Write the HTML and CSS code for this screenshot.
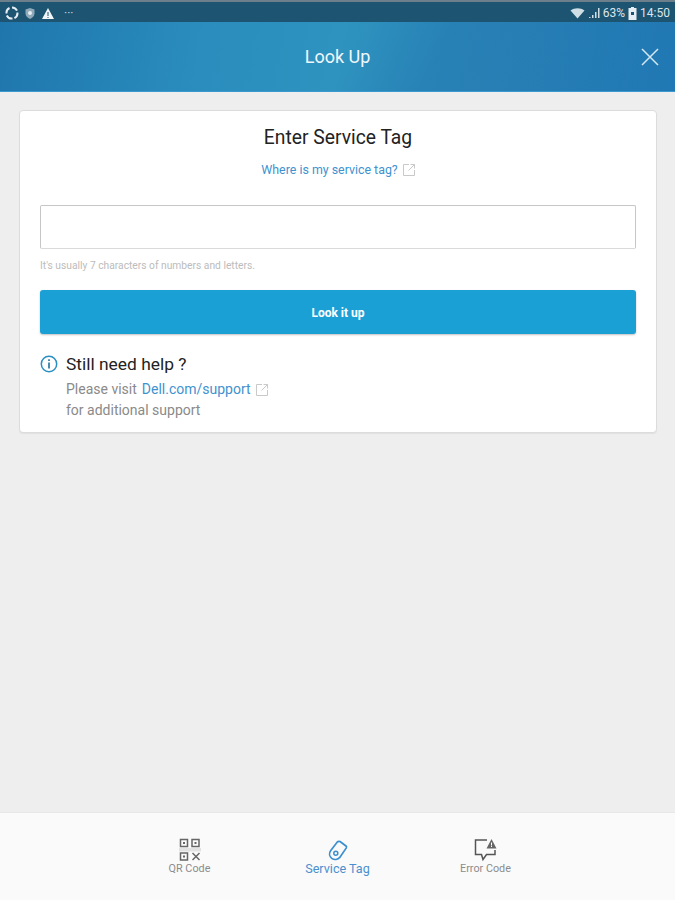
FILE: index.html
```html
<!DOCTYPE html>
<html lang="en">
<head>
    <meta charset="UTF-8">
    <meta name="viewport" content="width=device-width, initial-scale=1.0">
    <title>Look Up</title>
    <link rel="stylesheet" href="styles.css">
</head>
<body>
    <div class="page">
        <div class="status-bar">
            <div class="status-left">
                <svg width="14" height="14" viewBox="0 0 14 14"><path d="M7 1.500a5.500 5.500 0 0 1 5 3.200M12.400 6.500a5.500 5.500 0 0 1-3 5.600M7.500 12.500a5.500 5.500 0 0 1-5.700-3M1.500 7.500a5.500 5.500 0 0 1 3-5.500" fill="none" stroke="#e6eef3" stroke-width="2"/></svg>
                <svg width="12" height="13" viewBox="0 0 12 13"><path d="M6 1l4.500 1.500v4c0 2.500-2 4.500-4.500 5.500-2.500-1-4.500-3-4.500-5.500v-4z" fill="#8fa9b8"/><circle cx="6" cy="6" r="2" fill="#e6eef3"/></svg>
                <svg width="14" height="13" viewBox="0 0 14 13"><path d="M7 1l6 11H1z" fill="#f2f5f7"/><path d="M6.500 5h1v4h-1zM6.500 10h1v1h-1z" fill="#1c5472"/></svg>
                <span class="status-dots">···</span>
            </div>
            <div class="status-right">
                <svg width="15" height="11" viewBox="0 0 15 11"><path d="M0.500 2.500C4.500-0.500 10.500-0.500 14.500 2.500L7.500 10.500z" fill="#cfdde5"/></svg>
                <svg width="12" height="12" viewBox="0 0 12 12"><path d="M1 10h1.500v1H1zM4 8h1.500v3H4zM7 5h1.500v6H7zM10 1h1.500v10H10z" fill="#cfdde5"/></svg>
                <span>63%</span>
                <svg width="9" height="13" viewBox="0 0 9 13"><path d="M3 0h3v1h2.500v12H.5V1H3z" fill="#e6eef3"/><path d="M3 5h3v3H3z" fill="#1c5472"/></svg>
                <span>14:50</span>
            </div>
        </div>

        <header class="app-header">
            <h1>Look Up</h1>
            <svg class="close-icon" width="18" height="18" viewBox="0 0 18 18"><path d="M1 1l16 16M17 1L1 17" stroke="#d4e8f3" stroke-width="1.500" fill="none"/></svg>
        </header>

        <main class="content">
            <div class="card">
                <h2 class="card-title">Enter Service Tag</h2>
                <div class="where-link">
                    <a>Where is my service tag?</a>
                    <svg class="ext-icon" width="12" height="12" viewBox="0 0 12 12"><path d="M6 .5H.5v11h11V6M7.500.5h4v4M11.500.5L5.500 6.500" fill="none" stroke="#c9c9c9"/></svg>
                </div>
                <input class="tag-input" type="text">
                <p class="hint">It's usually 7 characters of numbers and letters.</p>
                <button class="lookup-btn" type="button">Look it up</button>
                <div class="help">
                    <div class="help-title">
                        <svg width="18" height="18" viewBox="0 0 18 18"><circle cx="9" cy="9" r="7.700" fill="none" stroke="#2b8fc4" stroke-width="1.500"/><path d="M8.200 4.200h1.600v1.700H8.200zM8.200 7.500h1.600v6H8.200z" fill="#1f6f9e"/></svg>
                        <span>Still need help ?</span>
                    </div>
                    <div class="help-text">
                        <div class="help-line">Please visit <a>Dell.com/support</a>
                            <svg class="ext-icon" width="12" height="12" viewBox="0 0 12 12"><path d="M6 .5H.5v11h11V6M7.500.5h4v4M11.500.5L5.500 6.500" fill="none" stroke="#c9c9c9"/></svg>
                        </div>
                        <div>for additional support</div>
                    </div>
                </div>
            </div>
        </main>

        <nav class="bottom-nav">
            <div class="nav-item">
                <svg width="22" height="24" viewBox="0 0 22 24">
                    <path d="M0 10h22v3.500H0z" fill="#e2e2e2"/>
                    <g fill="none" stroke="#666" stroke-width="1.500"><path d="M1.500 1.500h7v7h-7zM13 1.500h7v7h-7zM1.500 15h7v7h-7z"/></g>
                    <path d="M4 4h2v2H4zM15.500 4h2v2h-2zM4 17.500h2v2H4z" fill="#666"/>
                    <path d="M13.500 15l7 7M20.500 15l-7 7" stroke="#666" stroke-width="1.500"/>
                </svg>
                <span>QR Code</span>
            </div>
            <div class="nav-item active">
                <svg width="22" height="24" viewBox="0 0 22 24">
                    <path d="M13 3.500l6 4.500c.7.600.7 1.200.3 1.900l-6.500 9.500c-2 2.400-5.500 2.800-8 1-2.500-2-3-5.200-1.200-7.700l6.500-8.500c.8-.8 2-1 2.900-.700z" fill="none" stroke="#3b8fcf" stroke-width="1.700"/>
                    <circle cx="8.800" cy="15.300" r="2" fill="none" stroke="#3b8fcf" stroke-width="1.500"/>
                </svg>
                <span>Service Tag</span>
            </div>
            <div class="nav-item">
                <svg width="24" height="24" viewBox="0 0 24 24">
                    <path d="M13 2H1.500v14.500h6l1.500 5 3.500-5H21V12" fill="none" stroke="#555" stroke-width="1.500"/>
                    <path d="M17.500 1l5 9.500h-10z" fill="#666"/>
                    <path d="M17 4.500h1v3h-1zM17 8h1v1h-1z" fill="#fff"/>
                </svg>
                <span>Error Code</span>
            </div>
        </nav>
    </div>
</body>
</html>
```

FILE: styles.css
```css
* { margin: 0; padding: 0; box-sizing: border-box; }
body { font-family: Roboto, "Liberation Sans", sans-serif; background: #eeeeee; }

.page { width: 675px; height: 900px; display: flex; flex-direction: column; overflow: hidden; }

.status-bar { height: 22px; flex: none; display: flex; justify-content: space-between; align-items: center; padding: 2px 5px 0 5px; background: #1c5472; border-top: 2px solid #6d7f8a; color: #dbe6ec; font-size: 11px; }
.status-left { display: flex; align-items: center; gap: 5px; }
.status-dots { margin-left: 4px; font-size: 12px; line-height: 12px; color: #c4d4dd; }
.status-right { display: flex; align-items: center; gap: 3px; font-size: 12px; }

.app-header { height: 70px; flex: none; display: flex; align-items: center; justify-content: center; position: relative; background: linear-gradient(118deg, transparent 0, transparent 52%, rgba(32, 110, 170, 0.3) 64%, rgba(32, 110, 170, 0.1) 100%), linear-gradient(100deg, #1f76ad 0%, #2a8dbd 30%, #2e93bf 50%, #2a85b8 72%, #2079b5 100%); border-bottom: 1px solid #3a9ad0; }
.app-header h1 { font-size: 18px; font-weight: 400; color: #f0f7fb; }
.close-icon { position: absolute; right: 16px; top: 26px; }

.content { flex: 1; padding: 18px 18px 0 19px; }
.card { height: 323px; padding: 16px 20px 0; background: #fff; border: 1px solid #dcdcdc; border-radius: 4px; box-shadow: 0 1px 1px rgba(0,0,0,0.06); }
.card-title { font-size: 19.300px; font-weight: 400; color: #222; text-align: center; line-height: 22px; }

.where-link { margin-top: 13px; display: flex; justify-content: center; align-items: center; gap: 5px; font-size: 12.400px; line-height: 16px; }
.where-link a, .help-line a { color: #3f92cf; }
.ext-icon { flex: none; }

.tag-input { display: block; width: 100%; height: 44px; margin-top: 27px; background: #fff; border: 1px solid #c6c6c6; border-bottom-color: #dadada; border-radius: 2px; }
.hint { margin-top: 10px; font-size: 10.250px; line-height: 14px; color: #bcbcbc; }

.lookup-btn { display: block; width: 100%; height: 44px; margin-top: 17px; background: #1ba0d6; color: #fff; border: 0; border-radius: 3px; box-shadow: 0 1px 2px rgba(0,0,0,0.25); font-family: inherit; font-size: 12px; font-weight: 700; padding-top: 1px; }

.help { margin-top: 20px; }
.help-title { display: flex; align-items: center; gap: 8px; font-size: 17.400px; line-height: 20px; color: #222; }
.help-text { margin: 5px 0 0 26px; font-size: 14px; line-height: 21px; color: #8a8a8a; }
.help-line { display: flex; align-items: center; gap: 5px; }

.bottom-nav { height: 88px; flex: none; display: flex; justify-content: center; gap: 96px; padding-top: 25px; background: #fafafa; border-top: 1px solid #e8e8e8; }
.nav-item { width: 52px; display: flex; flex-direction: column; align-items: center; font-size: 10.800px; line-height: 14px; color: #8c8c8c; white-space: nowrap; }
.nav-item.active { color: #4a90cf; font-size: 12.600px; }
```
